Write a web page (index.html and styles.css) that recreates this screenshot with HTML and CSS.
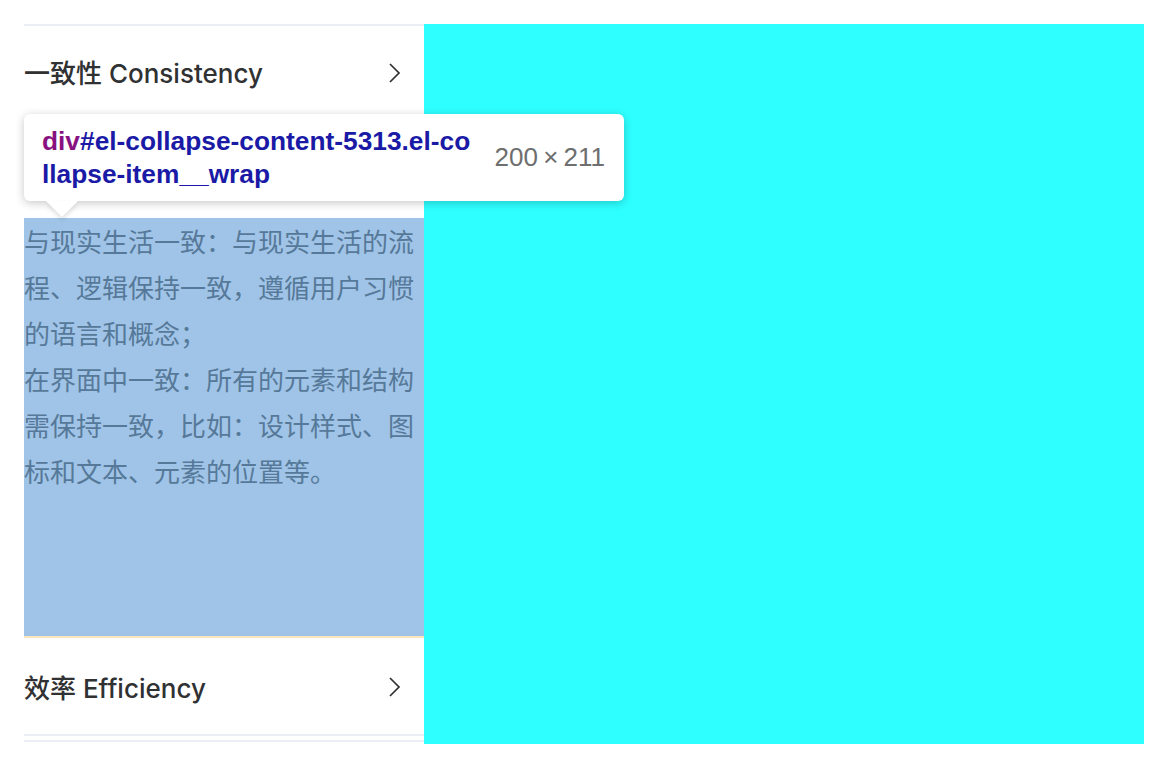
FILE: index.html
```html
<!DOCTYPE html>
<html lang="zh">
<head>
<meta charset="utf-8">
<link rel="stylesheet" href="styles.css">
</head>
<body>
<div class="page">
  <div class="collapse">
    <div class="item-header">
      <span class="title">一致性 Consistency</span>
      <svg class="chev" width="14" height="22" viewBox="0 0 14 22"><path d="M2 2 L11 11 L2 20" fill="none" stroke="#303133" stroke-width="1.7"/></svg>
    </div>
    <div class="spacer"></div>
    <div class="wrap">
      <div class="content">
        <div>与现实生活一致：与现实生活的流程、逻辑保持一致，遵循用户习惯的语言和概念；</div>
        <div>在界面中一致：所有的元素和结构需保持一致，比如：设计样式、图标和文本、元素的位置等。</div>
      </div>
    </div>
    <div class="item-header bordered">
      <span class="title">效率 Efficiency</span>
      <svg class="chev" width="14" height="22" viewBox="0 0 14 22"><path d="M2 2 L11 11 L2 20" fill="none" stroke="#303133" stroke-width="1.7"/></svg>
    </div>
    <div class="last-line"></div>
  </div>
  <div class="cyan"></div>

  <div class="tooltip">
    <div class="tip-name"><span class="tag">div</span><span class="sel">#el-collapse-content-5313.el-co<br>llapse-item__wrap</span></div>
    <div class="tip-size">200&thinsp;×&thinsp;211</div>
    <div class="tip-arrow"></div>
  </div>
</div>
</body>
</html>
```

FILE: styles.css
```css
html, body {
  margin: 0;
  padding: 0;
  background: #ffffff;
}

.page {
  position: relative;
  display: flex;
  align-items: flex-start;
  padding: 24px 0 0 24px;
  font-family: "Liberation Sans", "Noto Sans CJK SC", sans-serif;
}

.collapse {
  width: 400px;
  border-top: 2px solid #ebeef5;
  display: flex;
  flex-direction: column;
}

.item-header {
  height: 96px;
  display: flex;
  align-items: center;
  justify-content: space-between;
  font-size: 26px;
  color: #303133;
}

.item-header .title {
  font-family: "Inter", "Noto Sans CJK SC", sans-serif;
  font-weight: 500;
  font-size: 26px;
  position: relative;
  top: -3px;
}

.chev {
  margin-right: 22px;
  position: relative;
  top: -1px;
}

.item-header.bordered {
  border-bottom: 2px solid #ebeef5;
}

.item-header.bordered .title {
  top: 0;
}

.item-header.bordered .chev {
  top: 1px;
}

.spacer {
  height: 96px;
}

.wrap {
  height: 418px;
  background: #a0c4e7;
  border-bottom: 2px solid #fbe6bf;
}

.content {
  font-family: "Noto Sans CJK SC", sans-serif;
  font-size: 26px;
  line-height: 46px;
  color: #567999;
}

.last-line {
  height: 0;
  margin-top: 4px;
  border-bottom: 2px solid #ebeef5;
}

.cyan {
  width: 720px;
  height: 720px;
  background: #2effff;
}

.tooltip {
  position: absolute;
  left: 24px;
  top: 114px;
  width: 600px;
  height: 87px;
  box-sizing: border-box;
  padding: 0 19px 0 18px;
  background: #ffffff;
  border-radius: 6px;
  box-shadow: 0 2px 10px rgba(0, 0, 0, 0.22);
  display: flex;
  align-items: center;
  justify-content: space-between;
}

.tip-name {
  font-family: "Liberation Sans", sans-serif;
  font-weight: bold;
  font-size: 26.3px;
  line-height: 33px;
}

.tag {
  color: #881280;
}

.sel {
  color: #1a1aa6;
}

.tip-size {
  font-family: "Liberation Sans", sans-serif;
  font-size: 26px;
  color: #6e6e6e;
}

.tip-arrow {
  position: absolute;
  left: 22px;
  bottom: -16px;
  width: 0;
  height: 0;
  border-left: 16px solid transparent;
  border-right: 16px solid transparent;
  border-top: 16px solid #ffffff;
  filter: drop-shadow(0 3px 2px rgba(0, 0, 0, 0.12));
}
```
